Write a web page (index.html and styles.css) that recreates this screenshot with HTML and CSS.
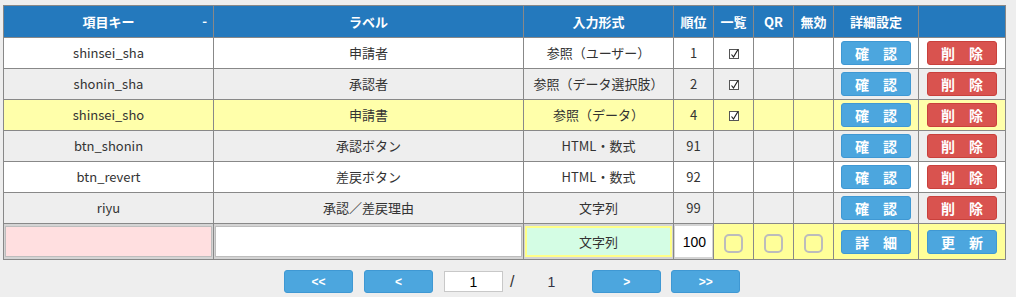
FILE: index.html
```html
<!DOCTYPE html>
<html lang="ja">
<head>
<meta charset="utf-8">
<link rel="stylesheet" href="styles.css">
</head>
<body>
<div class="page">
  <table class="grid">
    <colgroup>
      <col class="w-key"><col class="w-label"><col class="w-type"><col class="w-sm"><col class="w-sm"><col class="w-sm"><col class="w-sm"><col class="w-btn"><col class="w-btn2">
    </colgroup>
    <thead>
      <tr>
        <th class="sortable">項目キー<span class="sort">-</span></th>
        <th>ラベル</th>
        <th>入力形式</th>
        <th>順位</th>
        <th>一覧</th>
        <th>QR</th>
        <th>無効</th>
        <th>詳細設定</th>
        <th></th>
      </tr>
    </thead>
    <tbody>
      <tr class="odd">
        <td>shinsei_sha</td><td>申請者</td><td>参照（ユーザー）</td><td>1</td>
        <td><svg class="chk" width="12" height="12" viewBox="0 0 12 12"><rect x="1.5" y="1.5" width="9" height="9" fill="#fff" stroke="#555" stroke-width="1"/><path d="M3.5 6.5 L5.5 9 L10 1.5" fill="none" stroke="#222" stroke-width="1.2"/></svg></td>
        <td></td><td></td>
        <td><span class="btn blue">確　認</span></td>
        <td><span class="btn red">削　除</span></td>
      </tr>
      <tr class="even">
        <td>shonin_sha</td><td>承認者</td><td>参照（データ選択肢）</td><td>2</td>
        <td><svg class="chk" width="12" height="12" viewBox="0 0 12 12"><rect x="1.5" y="1.5" width="9" height="9" fill="#fff" stroke="#555" stroke-width="1"/><path d="M3.5 6.5 L5.5 9 L10 1.5" fill="none" stroke="#222" stroke-width="1.2"/></svg></td>
        <td></td><td></td>
        <td><span class="btn blue">確　認</span></td>
        <td><span class="btn red">削　除</span></td>
      </tr>
      <tr class="sel">
        <td>shinsei_sho</td><td>申請書</td><td>参照（データ）</td><td>4</td>
        <td><svg class="chk" width="12" height="12" viewBox="0 0 12 12"><rect x="1.5" y="1.5" width="9" height="9" fill="#fff" stroke="#555" stroke-width="1"/><path d="M3.5 6.5 L5.5 9 L10 1.5" fill="none" stroke="#222" stroke-width="1.2"/></svg></td>
        <td></td><td></td>
        <td><span class="btn blue">確　認</span></td>
        <td><span class="btn red">削　除</span></td>
      </tr>
      <tr class="even">
        <td>btn_shonin</td><td>承認ボタン</td><td>HTML・数式</td><td>91</td>
        <td></td><td></td><td></td>
        <td><span class="btn blue">確　認</span></td>
        <td><span class="btn red">削　除</span></td>
      </tr>
      <tr class="odd">
        <td>btn_revert</td><td>差戻ボタン</td><td>HTML・数式</td><td>92</td>
        <td></td><td></td><td></td>
        <td><span class="btn blue">確　認</span></td>
        <td><span class="btn red">削　除</span></td>
      </tr>
      <tr class="even">
        <td>riyu</td><td>承認／差戻理由</td><td>文字列</td><td>99</td>
        <td></td><td></td><td></td>
        <td><span class="btn blue">確　認</span></td>
        <td><span class="btn red">削　除</span></td>
      </tr>
      <tr class="newrow">
        <td class="in-cell"><span class="field pink"></span></td>
        <td class="in-cell"><span class="field white"></span></td>
        <td class="in-cell"><span class="field green">文字列</span></td>
        <td class="in-cell"><span class="field num">100</span></td>
        <td class="yel"><span class="cbox"></span></td>
        <td class="yel"><span class="cbox"></span></td>
        <td class="yel"><span class="cbox"></span></td>
        <td class="yel"><span class="btn blue">詳　細</span></td>
        <td class="yel"><span class="btn blue">更　新</span></td>
      </tr>
    </tbody>
  </table>
  <div class="pager">
    <span class="pbtn first">&lt;&lt;</span>
    <span class="pbtn prev">&lt;</span>
    <span class="pinput">1</span>
    <span class="slash">/</span>
    <span class="total">1</span>
    <span class="pbtn next">&gt;</span>
    <span class="pbtn last">&gt;&gt;</span>
  </div>
</div>
</body>
</html>
```
FILE: styles.css
```css
html, body {
  margin: 0;
  padding: 0;
  background: #eeeeee;
}
body {
  font-family: "Noto Sans CJK JP", "Noto Sans", sans-serif;
  font-size: 13px;
  color: #333;
}
.page {
  padding: 5px 0 0 3px;
}
.grid {
  border-collapse: collapse;
  table-layout: fixed;
  width: 1003px;
}
.w-key { width: 210px; }
.w-label { width: 310px; }
.w-type { width: 150px; }
.w-sm { width: 40px; }
.w-btn { width: 85px; }
.w-btn2 { width: 87px; }
.grid th, .grid td {
  border: 1px solid #888;
  padding: 0;
  text-align: center;
  vertical-align: middle;
  line-height: 16px;
}
.grid th {
  background: #2479bd;
  color: #fff;
  font-weight: bold;
  height: 31px;
  font-size: 13px;
}
.sortable {
  position: relative;
}
.sort {
  position: absolute;
  right: 6px;
  top: 7px;
}
.grid td {
  height: 30px;
}
.odd td { background: #fff; }
.even td { background: #eeeeee; }
.sel td { background: #ffffaa; }
.chk {
  display: block;
  margin: 2px auto 0;
}
.btn {
  display: flex;
  align-items: center;
  justify-content: center;
  box-sizing: border-box;
  width: 70px;
  height: 24px;
  margin: 0 auto;
  border-radius: 3px;
  color: #fff;
  font-weight: bold;
  font-size: 14px;
  line-height: 1;
}
.blue {
  background: #4ca6de;
  border: 1px solid #3f98d3;
}
.red {
  background: #d9534f;
  border: 1px solid #c9403c;
}
.newrow td {
  height: 33px;
}
.newrow .in-cell {
  padding: 1px;
  background: #d4d4d4;
}
.field {
  display: flex;
  align-items: center;
  justify-content: center;
  box-sizing: border-box;
  height: 31px;
  width: 100%;
}
.pink {
  background: #ffdfe0;
  border: 1px solid #bdbdbd;
}
.white {
  background: #fff;
  border: 1px solid #bdbdbd;
}
.green {
  background: #d4fde4;
  border: 2px solid #ffff88;
  color: #333;
}
.num {
  background: #fff;
  justify-content: flex-end;
  padding-right: 6px;
  color: #000;
  font-family: "Liberation Sans", sans-serif;
  font-size: 14px;
}
.yel {
  background: #ffff99;
}
.cbox {
  display: block;
  box-sizing: border-box;
  width: 19px;
  height: 19px;
  margin: 4px auto 0;
  border: 2px solid #bcbcbc;
  border-radius: 5px;
}
.pager {
  display: flex;
  align-items: center;
  padding: 10px 0 0 281px;
}
.pbtn {
  display: flex;
  align-items: center;
  justify-content: center;
  box-sizing: border-box;
  width: 69px;
  height: 23px;
  background: #4ca6de;
  border: 1px solid #3f98d3;
  border-radius: 3px;
  color: #fff;
  font-weight: bold;
  font-family: "Liberation Sans", sans-serif;
  font-size: 12px;
}
.prev { margin-left: 11px; }
.pinput {
  display: flex;
  align-items: center;
  justify-content: center;
  box-sizing: border-box;
  width: 59px;
  height: 21px;
  margin-left: 11px;
  background: #fff;
  border: 1px solid #c8c8c8;
  color: #000;
  font-family: "Liberation Sans", sans-serif;
  font-size: 14px;
}
.slash {
  margin-left: 7px;
  font-family: "Liberation Sans", sans-serif;
  font-size: 16px;
  color: #333;
}
.total {
  margin-left: 33px;
  font-family: "Liberation Sans", sans-serif;
  font-size: 14px;
  color: #334;
}
.next { margin-left: 37px; }
.last { margin-left: 10px; }
```
